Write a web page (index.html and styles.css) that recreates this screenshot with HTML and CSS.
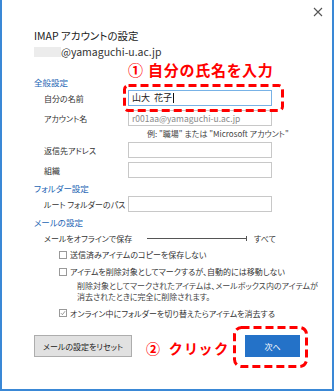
FILE: index.html
```html
<!DOCTYPE html>
<html lang="ja">
<head>
<meta charset="utf-8">
<title>IMAP アカウントの設定</title>
<link rel="stylesheet" href="styles.css">
</head>
<body>
<div class="dialog">
  <div class="titlebar">
    <svg class="close" width="10" height="10" viewBox="0 0 10 10"><path d="M1 1 L9 9 M9 1 L1 9" stroke="#555" stroke-width="1.1" fill="none"/></svg>
  </div>
  <div class="content">
    <h1 class="title">IMAP アカウントの設定</h1>
    <div class="email"><span class="redacted"></span>@yamaguchi-u.ac.jp</div>

    <h2 class="section first">全般設定</h2>
    <div class="row"><span class="label">自分の名前</span><div class="input focused">山大&nbsp;&nbsp;花子<span class="caret"></span></div></div>
    <div class="row"><span class="label">アカウント名</span><div class="input muted">r001aa@yamaguchi-u.ac.jp</div></div>
    <div class="hint">例: "職場" または "Microsoft アカウント"</div>
    <div class="row"><span class="label">返信先アドレス</span><div class="input"></div></div>
    <div class="row"><span class="label">組織</span><div class="input"></div></div>

    <h2 class="section">フォルダー設定</h2>
    <div class="row"><span class="label">ルート フォルダーのパス</span><div class="input"></div></div>

    <h2 class="section">メールの設定</h2>
    <div class="slider-row"><span class="label wide">メールをオフラインで保存</span><span class="track"></span><span class="slider-val">すべて</span></div>
    <div class="check"><span class="box"></span>送信済みアイテムのコピーを保存しない</div>
    <div class="check"><span class="box"></span>アイテムを削除対象としてマークするが、自動的には移動しない</div>
    <div class="note">削除対象としてマークされたアイテムは、メールボックス内のアイテムが<br>消去されたときに完全に削除されます。</div>
    <div class="check checked"><span class="box"><svg width="8" height="8" viewBox="0 0 8 8"><path d="M1.2 4.2 L3.2 6.2 L6.8 1.6" stroke="#666" stroke-width="0.9" fill="none"/></svg></span>オンライン中にフォルダーを切り替えたらアイテムを消去する</div>

    <div class="footer">
      <button class="btn reset">メールの設定をリセット</button>
      <button class="btn next">次へ</button>
    </div>
  </div>

  <div class="ann ann1">① 自分の氏名を入力</div>
  <svg class="dash dash1" width="161" height="28" viewBox="0 0 161 28"><rect x="1.5" y="1.5" width="158" height="25" rx="4" fill="none" stroke="#f00" stroke-width="3" stroke-dasharray="8 4"/></svg>
  <div class="ann ann2">② クリック</div>
  <svg class="dash dash2" width="75" height="42" viewBox="0 0 75 42"><rect x="1.5" y="1.5" width="72" height="39" rx="7" fill="none" stroke="#f00" stroke-width="3" stroke-dasharray="8 4"/></svg>
</div>
</body>
</html>
```
FILE: styles.css
```css
html, body {
  margin: 0;
  padding: 0;
  background: #fff;
}
body {
  font-family: "Noto Sans CJK JP", "Noto Sans", sans-serif;
  font-feature-settings: "palt";
  color: #333;
}
.dialog {
  position: relative;
  width: 334px;
  height: 391px;
  box-sizing: border-box;
  border: 2px solid #3a88d6;
  border-top: none;
  background: #fff;
  overflow: hidden;
}
.titlebar {
  height: 24px;
  display: flex;
  justify-content: flex-end;
  align-items: center;
  padding-right: 9px;
}
.close { display: block; }
.content {
  padding-left: 32px;
}
.title {
  margin: 5px 0 0;
  font-size: 10.5px;
  line-height: 14px;
  font-weight: normal;
  color: #222;
}
.email {
  margin-top: 3px;
  font-size: 10.5px;
  line-height: 12px;
  display: flex;
  align-items: center;
  color: #333;
}
.redacted {
  display: inline-block;
  width: 27px;
  height: 10px;
  background: #ececec;
}
.section {
  margin: 2px 0 0;
  font-size: 8.5px;
  line-height: 12px;
  font-weight: normal;
  color: #2466b4;
}
.section.first { margin-top: 18px; }
.row {
  display: flex;
  align-items: center;
  height: 20px;
  font-size: 8px;
}
.label {
  margin-left: 10px;
  width: 84px;
  flex: none;
  white-space: nowrap;
}
.label.wide { width: 103px; }
.input {
  width: 144px;
  height: 16px;
  box-sizing: border-box;
  border: 1px solid #c8c8c8;
  font-size: 9px;
  line-height: 14px;
  padding-left: 3px;
  display: flex;
  align-items: center;
  color: #222;
}
.input.focused { border-color: #78b2e6; }
.input.muted { color: #888; font-size: 8.5px; }
.caret {
  display: inline-block;
  width: 1px;
  height: 10px;
  background: #111;
  margin-left: 1px;
}
.hint {
  font-size: 8px;
  line-height: 12px;
  padding-left: 113px;
  color: #444;
}
.slider-row {
  display: flex;
  align-items: center;
  height: 16px;
  margin-top: 2px;
  font-size: 8px;
}
.track {
  position: relative;
  width: 100px;
  height: 1px;
  background: #555;
}
.track::after {
  content: "";
  position: absolute;
  right: 0;
  top: -2px;
  width: 1px;
  height: 5px;
  background: #555;
}
.slider-val { margin-left: 7px; }
.check {
  display: flex;
  align-items: center;
  height: 17px;
  font-size: 8px;
  padding-left: 25px;
  white-space: nowrap;
}
.box {
  width: 8px;
  height: 8px;
  box-sizing: border-box;
  border: 1px solid #999;
  margin-right: 3px;
  flex: none;
  display: flex;
  align-items: center;
  justify-content: center;
}
.box svg { display: block; }
.note {
  padding-left: 43px;
  font-size: 8px;
  line-height: 11px;
  color: #444;
  white-space: nowrap;
}
.check.checked { margin-top: 3px; height: 16px; }
.footer {
  display: flex;
  justify-content: space-between;
  margin-top: 14px;
  padding-right: 32px;
}
.btn {
  font-family: inherit;
  font-feature-settings: "palt";
  font-size: 8px;
  height: 22px;
  padding: 0;
  margin: 0;
  box-sizing: border-box;
}
.reset {
  width: 98px;
  background: #e1e1e1;
  border: 1px solid #adadad;
  color: #222;
}
.next {
  width: 55px;
  background: #2472c8;
  border: 1px solid #2472c8;
  color: #fff;
}
.ann {
  position: absolute;
  color: #f00;
  font-weight: bold;
  white-space: nowrap;
}
.ann1 {
  left: 126px;
  top: 61px;
  font-size: 15px;
  line-height: 18px;
  letter-spacing: 0.8px;
}
.ann2 {
  left: 144px;
  top: 339px;
  font-size: 14px;
  line-height: 18px;
  letter-spacing: 3px;
}
.dash { position: absolute; }
.dash1 { left: 121px; top: 84px; }
.dash2 { left: 231px; top: 326px; }
```
